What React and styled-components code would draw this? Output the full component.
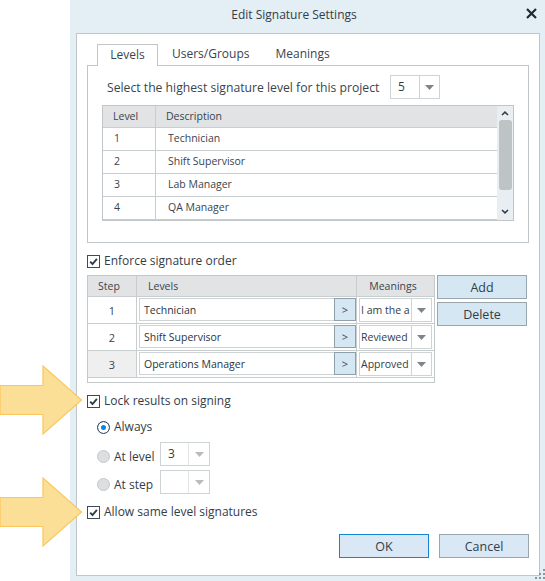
import styled, { createGlobalStyle } from "styled-components";

const GlobalStyle = createGlobalStyle`
  html, body {
    margin: 0;
    background: #fff;
  }
  * {
    box-sizing: border-box;
  }
`;

const levels = [
  { id: 1, name: "Technician" },
  { id: 2, name: "Shift Supervisor" },
  { id: 3, name: "Lab Manager" },
  { id: 4, name: "QA Manager" },
];

const steps = [
  { id: 1, level: "Technician", meaning: "I am the a" },
  { id: 2, level: "Shift Supervisor", meaning: "Reviewed" },
  { id: 3, level: "Operations Manager", meaning: "Approved", shaded: true },
];

function Caret() {
  return (
    <svg width="9" height="5" viewBox="0 0 9 5">
      <polygon points="0,0 9,0 4.5,5" fill={"#7d868d"} />
    </svg>
  );
}

function Check() {
  return (
    <svg width="13" height="13" viewBox="0 0 13 13">
      <rect x="0.5" y="0.5" width="12" height="12" fill="#fff" stroke="#3f4a55" />
      <path d="M3.2 6.6 L5.5 9 L9.9 3.9" fill="none" stroke="#333d47" strokeWidth="1.9" />
    </svg>
  );
}

function Arrow() {
  return (
    <svg width="84" height="70" viewBox="0 0 84 70">
      <path
        d="M0 20.5 H43 V1 L81.5 35 L43 69 V49.5 H0 Z"
        fill="#fcdf96"
        stroke="#fbc75c"
        strokeWidth="1.2"
      />
    </svg>
  );
}

function Grip() {
  const dots = [[8, 0], [4, 4], [8, 4], [0, 8], [4, 8], [8, 8]];
  return (
    <svg width="10" height="10" viewBox="0 0 10 10">
      {dots.map(([x, y]) => (
        <rect key={`${x}-${y}`} x={x} y={y} width="2" height="2" fill="#8a949c" />
      ))}
    </svg>
  );
}

export default function App() {
  return (
    <Page>
      <GlobalStyle />
      <PointerTop><Arrow /></PointerTop>
      <PointerBottom><Arrow /></PointerBottom>
      <Dialog>
        <TitleBar>
          Edit Signature Settings
          <CloseMark>
            <svg width="11" height="11" viewBox="0 0 11 11">
              <path d="M1 1 L10 10 M10 1 L1 10" stroke="#1f2a33" strokeWidth="2.2" />
            </svg>
          </CloseMark>
        </TitleBar>
        <Panel>
          <Tabs>
            <Tab $active>Levels</Tab>
            <Tab>Users/Groups</Tab>
            <Tab>Meanings</Tab>
          </Tabs>
          <TabBody>
            <HighestRow>
              <HighestLabel>Select the highest signature level for this project</HighestLabel>
              <Select $width={50} $left={29}>
                <SelectValue>5</SelectValue>
                <SelectCaret><Caret /></SelectCaret>
              </Select>
            </HighestRow>
            <LevelGrid>
              <LevelList>
                <HeaderRow $height={22}>
                  <LevelCell>Level</LevelCell>
                  <DescriptionCell>Description</DescriptionCell>
                </HeaderRow>
                {levels.map((level) => (
                  <LevelRow key={level.id}>
                    <LevelCell $num>{level.id}</LevelCell>
                    <DescriptionCell $body>{level.name}</DescriptionCell>
                  </LevelRow>
                ))}
              </LevelList>
              <Scrollbar>
                <ScrollEnd>
                  <svg width="8" height="5" viewBox="0 0 8 5">
                    <path d="M1 4 L4 1.2 L7 4" fill="none" stroke="#333d47" strokeWidth="1.6" />
                  </svg>
                </ScrollEnd>
                <ScrollThumb />
                <ScrollEnd>
                  <svg width="8" height="5" viewBox="0 0 8 5">
                    <path d="M1 1 L4 3.8 L7 1" fill="none" stroke="#333d47" strokeWidth="1.6" />
                  </svg>
                </ScrollEnd>
              </Scrollbar>
            </LevelGrid>
          </TabBody>
          <CheckRow $top={11}>
            <Check />
            Enforce signature order
          </CheckRow>
          <StepArea>
            <StepGrid>
              <HeaderRow $height={21}>
                <StepCell $head>Step</StepCell>
                <LevelsHead>Levels</LevelsHead>
                <MeaningsHead>Meanings</MeaningsHead>
              </HeaderRow>
              {steps.map((step) => (
                <StepRow key={step.id}>
                  <StepCell $shaded={step.shaded}>{step.id}</StepCell>
                  <LevelPicker>
                    <LevelInput>{step.level}</LevelInput>
                    <PickButton>&gt;</PickButton>
                  </LevelPicker>
                  <MeaningCell>
                    <Select $width={73} $left={52}>
                      <MeaningValue>{step.meaning}</MeaningValue>
                      <SelectCaret><Caret /></SelectCaret>
                    </Select>
                  </MeaningCell>
                </StepRow>
              ))}
              <StepFooter />
            </StepGrid>
            <SideButtons>
              <ActionButton>Add</ActionButton>
              <ActionButton>Delete</ActionButton>
            </SideButtons>
          </StepArea>
          <CheckRow $top={11}>
            <Check />
            Lock results on signing
          </CheckRow>
          <RadioGroup>
            <RadioRow $height={26}>
              <Radio $on />
              <RadioLabel>Always</RadioLabel>
            </RadioRow>
            <RadioRow $height={28}>
              <Radio $low />
              <RadioLabel $low>At level</RadioLabel>
              <Select $width={50} $left={28}>
                <SelectValue>3</SelectValue>
                <SelectCaret $muted><Caret /></SelectCaret>
              </Select>
            </RadioRow>
            <RadioRow $height={28}>
              <Radio $low />
              <RadioLabel $low>At step</RadioLabel>
              <Select $width={50} $left={28}>
                <SelectValue />
                <SelectCaret $muted><Caret /></SelectCaret>
              </Select>
            </RadioRow>
          </RadioGroup>
          <CheckRow $top={9}>
            <Check />
            Allow same level signatures
          </CheckRow>
          <Footer>
            <FooterButton $primary>OK</FooterButton>
            <FooterButton>Cancel</FooterButton>
          </Footer>
        </Panel>
        <GripMark><Grip /></GripMark>
      </Dialog>
    </Page>
  );
}

const Page = styled.div`
  position: relative;
  width: 545px;
  height: 581px;
  padding-left: 70px;
  overflow: hidden;
  font-family: "Open Sans", "Noto Sans", sans-serif;
  font-size: 12px;
  color: #3a444e;
`;

const PointerTop = styled.div`
  position: absolute;
  left: 0;
  top: 365px;
  z-index: 2;
  line-height: 0;
`;

const PointerBottom = styled(PointerTop)`
  top: 477px;
`;

const Dialog = styled.div`
  position: relative;
  width: 475px;
  height: 581px;
  background: #e3eef5;
  padding: 0 5px 5px 6px;
  display: flex;
  flex-direction: column;
`;

const TitleBar = styled.div`
  position: relative;
  height: 33px;
  flex: none;
  display: flex;
  align-items: center;
  justify-content: center;
  padding: 0 28px 5px 0;
  font-size: 12px;
  color: #333d47;
`;

const CloseMark = styled.span`
  position: absolute;
  right: 3px;
  top: 8px;
  line-height: 0;
`;

const Panel = styled.div`
  flex: 1;
  background: #fff;
  border: 1px solid #bfc5c9;
  padding: 10px 10px 0 10px;
  display: flex;
  flex-direction: column;
`;

const Tabs = styled.div`
  display: flex;
  height: 21px;
  padding-left: 10px;
  position: relative;
  z-index: 1;
`;

const Tab = styled.div`
  width: ${(p) => (p.$active ? "61px" : "auto")};
  height: ${(p) => (p.$active ? "22px" : "21px")};
  padding: ${(p) => (p.$active ? "0 0 2px" : "0 12px 4px")};
  margin-right: ${(p) => (p.$active ? "1px" : "0")};
  display: flex;
  align-items: center;
  justify-content: center;
  font-size: 12px;
  background: #fff;
  border: ${(p) => (p.$active ? "1px solid #bfc5c9" : "1px solid transparent")};
  border-bottom: none;
`;

const TabBody = styled.div`
  width: 442px;
  height: 178px;
  border: 1px solid #bfc5c9;
  padding: 9px 14px 0 14px;
`;

const HighestRow = styled.div`
  display: flex;
  align-items: center;
  height: 24px;
  width: 412px;
  padding-left: 5px;
  white-space: nowrap;
`;

const HighestLabel = styled.span`
  width: 283px;
  flex: none;
  font-size: 12.2px;
`;

const Select = styled.div`
  width: ${(p) => p.$width}px;
  height: 24px;
  flex: none;
  background: #fff;
  border: 1px solid #ced3d6;
  display: grid;
  grid-template-columns: ${(p) => p.$left - 1}px 1fr;
`;

const SelectValue = styled.div`
  display: flex;
  align-items: center;
  padding: 0 0 2px 7px;
  color: #333d47;
  font-size: 12px;
`;

const MeaningValue = styled.div`
  display: flex;
  align-items: center;
  padding-left: 1px;
  overflow: hidden;
  white-space: nowrap;
  font-size: 10.5px;
  color: #333d47;
`;

const SelectCaret = styled.div`
  border-left: 1px solid #ced3d6;
  display: flex;
  align-items: center;
  justify-content: center;
  opacity: ${(p) => (p.$muted ? 0.55 : 1)};
`;

const LevelGrid = styled.div`
  margin-top: 6px;
  width: 412px;
  height: 116px;
  border: 1px solid #bfc5c9;
  display: flex;
`;

const LevelList = styled.div`
  flex: 1;
  min-width: 0;
`;

const HeaderRow = styled.div`
  display: flex;
  height: ${(p) => p.$height}px;
  background: #e1e3e5;
  border-bottom: 1px solid #c8cdd0;
  font-size: 10.5px;
`;

const LevelRow = styled.div`
  display: flex;
  height: 23px;
  border-bottom: 1px solid #c8cdd0;
  font-size: 10.5px;
`;

const LevelCell = styled.div`
  width: 53px;
  flex: none;
  display: flex;
  align-items: center;
  padding: ${(p) => (p.$num ? "0 0 2px 11px" : "0 0 1px 10px")};
  border-right: 1px solid #c8cdd0;
`;

const DescriptionCell = styled.div`
  flex: 1;
  display: flex;
  align-items: center;
  padding: ${(p) => (p.$body ? "0 0 2px 12px" : "0 0 1px 10px")};
`;

const Scrollbar = styled.div`
  width: 16px;
  flex: none;
  background: #e8eef2;
  display: flex;
  flex-direction: column;
  align-items: center;
`;

const ScrollEnd = styled.div`
  height: 14px;
  flex: none;
  display: flex;
  align-items: center;
  justify-content: center;
  line-height: 0;
`;

const ScrollThumb = styled.div`
  width: 13px;
  height: 70px;
  margin: 0 0 14px 1px;
  background: #bec3c6;
  border-radius: 3px;
`;

const CheckRow = styled.div`
  display: flex;
  align-items: center;
  gap: 4px;
  height: 14px;
  margin-top: ${(p) => p.$top}px;
  font-size: 12px;
  line-height: 14px;
  color: #333d47;

  svg {
    flex: none;
  }
`;

const StepArea = styled.div`
  display: flex;
  gap: 2px;
  margin-top: 7px;
`;

const StepGrid = styled.div`
  width: 348px;
  height: 108px;
  border: 1px solid #c3c8cb;
`;

const StepRow = styled.div`
  display: flex;
  height: 27px;
  border-bottom: 1px solid #c8cdd0;
`;

const StepCell = styled.div`
  width: 49px;
  flex: none;
  display: flex;
  align-items: center;
  justify-content: center;
  padding-right: ${(p) => (p.$head ? "6px" : "0")};
  background: ${(p) => (p.$shaded ? "#efefef" : "transparent")};
  border-right: 1px solid #c8cdd0;
  font-size: ${(p) => (p.$head ? "10.5px" : "11px")};
`;

const LevelsHead = styled.div`
  width: 220px;
  flex: none;
  display: flex;
  align-items: center;
  padding-left: 11px;
  border-right: 1px solid #c8cdd0;
`;

const MeaningsHead = styled.div`
  flex: 1;
  display: flex;
  align-items: center;
  justify-content: center;
  padding-right: 5px;
`;

const LevelPicker = styled.div`
  width: 220px;
  flex: none;
  display: flex;
  padding: 1px 0 2px 2px;
  border-right: 1px solid #c8cdd0;
`;

const LevelInput = styled.div`
  flex: 1;
  display: flex;
  align-items: center;
  padding-left: 4px;
  background: #fff;
  border: 1px solid #ced3d6;
  border-right: none;
  font-size: 10.5px;
  color: #2b343c;
`;

const PickButton = styled.div`
  width: 22px;
  flex: none;
  display: flex;
  align-items: center;
  justify-content: center;
  background: #d6e7f4;
  border: 1px solid #8fa0aa;
  font-size: 11px;
`;

const MeaningCell = styled.div`
  flex: 1;
  display: flex;
  align-items: flex-start;
  padding: 1px 0 0 2px;
`;

const StepFooter = styled.div`
  height: 5px;
`;

const SideButtons = styled.div`
  display: flex;
  flex-direction: column;
  gap: 3px;
`;

const ActionButton = styled.div`
  width: 90px;
  height: 24px;
  display: flex;
  align-items: center;
  justify-content: center;
  background: #d6e7f4;
  border: 1px solid #9aa6ae;
  font-size: 12.5px;
  color: #333d47;
`;

const RadioGroup = styled.div`
  padding: 6px 0 0 10px;
  display: flex;
  flex-direction: column;
`;

const RadioRow = styled.div`
  display: flex;
  align-items: center;
  height: ${(p) => p.$height}px;
`;

const Radio = styled.span`
  width: 13px;
  height: 13px;
  flex: none;
  margin-top: ${(p) => (p.$low ? "5px" : "0")};
  border-radius: 50%;
  border: 1px solid ${(p) => (p.$on ? "#3f4a55" : "#c4c8cb")};
  background: ${(p) => (p.$on ? "#0a84e0" : "#dcdee0")};
  box-shadow: ${(p) => (p.$on ? "inset 0 0 0 3px #fff" : "none")};
`;

const RadioLabel = styled.span`
  width: ${(p) => (p.$low ? "46px" : "auto")};
  margin: ${(p) => (p.$low ? "4px 0 0 4px" : "0 0 2px 4px")};
  font-size: 12px;
  color: #333d47;
`;

const Footer = styled.div`
  margin-top: 15px;
  display: flex;
  justify-content: flex-end;
  gap: 10px;
`;

const FooterButton = styled.div`
  width: 90px;
  height: 24px;
  display: flex;
  align-items: center;
  justify-content: center;
  background: #d9e8f4;
  border: 1px solid ${(p) => (p.$primary ? "#1484d0" : "#9aa6ae")};
  font-size: 12.5px;
  color: #333d47;
`;

const GripMark = styled.div`
  position: absolute;
  right: 0;
  bottom: 2px;
  line-height: 0;
`;
